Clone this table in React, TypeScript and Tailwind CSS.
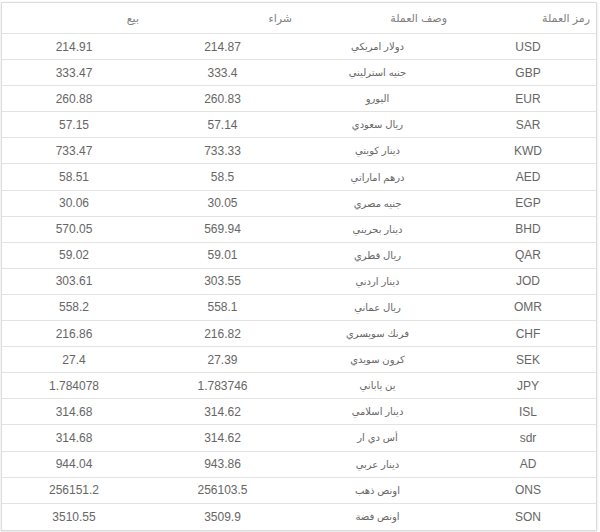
import React from "react";

const rows: [string, string, string, string][] = [
  ["USD", "دولار امريكي", "214.87", "214.91"],
  ["GBP", "جنيه استرليني", "333.4", "333.47"],
  ["EUR", "اليورو", "260.83", "260.88"],
  ["SAR", "ريال سعودي", "57.14", "57.15"],
  ["KWD", "دينار كويتي", "733.33", "733.47"],
  ["AED", "درهم اماراتي", "58.5", "58.51"],
  ["EGP", "جنيه مصري", "30.05", "30.06"],
  ["BHD", "دينار بحريني", "569.94", "570.05"],
  ["QAR", "ريال قطري", "59.01", "59.02"],
  ["JOD", "دينار اردني", "303.55", "303.61"],
  ["OMR", "ريال عماني", "558.1", "558.2"],
  ["CHF", "فرنك سويسري", "216.82", "216.86"],
  ["SEK", "كرون سويدي", "27.39", "27.4"],
  ["JPY", "ين ياباني", "1.783746", "1.784078"],
  ["ISL", "دينار اسلامي", "314.62", "314.68"],
  ["sdr", "أس دي ار", "314.62", "314.68"],
  ["AD", "دينار عربي", "943.86", "944.04"],
  ["ONS", "اونص ذهب", "256103.5", "256151.2"],
  ["SON", "اونص فضة", "3509.9", "3510.55"],
];

const grid = "grid grid-cols-[142px_155px_153px_1fr]";

export default function App() {
  return (
    <div className="w-[600px] h-[532px] bg-white pt-[2px] pl-[1px] pr-[3px] font-['Liberation_Sans','DejaVu_Sans',sans-serif]">
      <div dir="rtl" className="border border-[#dcdcdc] shadow-[0_1px_3px_rgba(0,0,0,0.12)] text-[12px] text-[#666]">
        <div className={`${grid} h-[31px] items-center border-b border-[#e3e3e3] text-[#808080]`}>
          <div className="pr-[6px] text-[11px]">رمز العملة</div>
          <div className="pr-[7px] text-[11px]">وصف العملة</div>
          <div className="pr-[7px] text-[11px]">شراء</div>
          <div className="pr-[7px] text-[11px]">بيع</div>
        </div>
        {rows.map((r, i) => (
          <div
            key={r[0]}
            className={`${grid} h-[26.1px] items-center text-center ${i < rows.length - 1 ? "border-b border-[#e3e3e3]" : ""}`}
          >
            <div dir="ltr" className="pl-[6px]">{r[0]}</div>
            <div className="text-[10px] pl-[2px]">{r[1]}</div>
            <div dir="ltr">{r[2]}</div>
            <div dir="ltr">{r[3]}</div>
          </div>
        ))}
      </div>
    </div>
  );
}
